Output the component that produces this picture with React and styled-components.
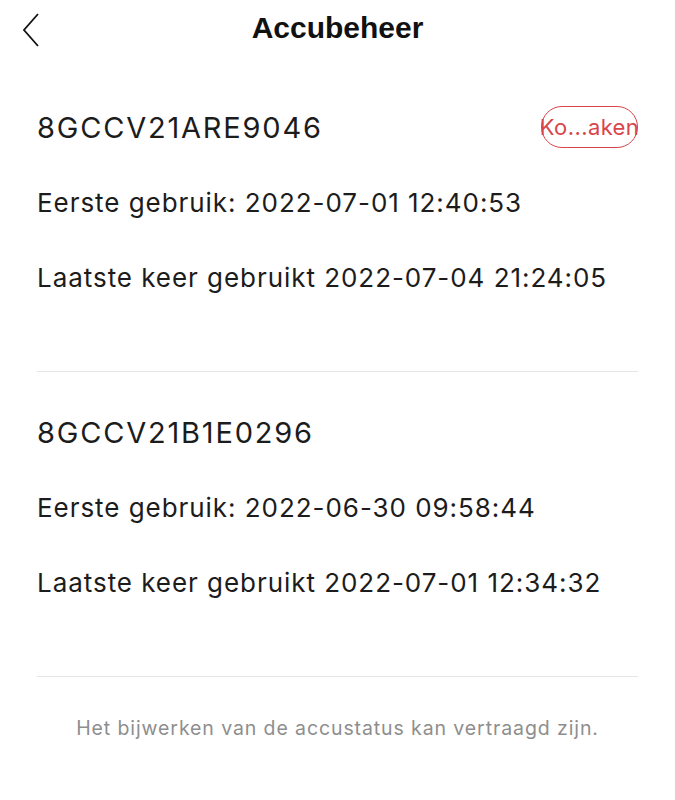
import React from 'react';
import styled, { createGlobalStyle } from 'styled-components';

const GlobalStyle = createGlobalStyle`
    html, body {
        margin: 0;
        padding: 0;
        background: #ffffff;
    }
    body {
        font-family: "Inter", "Noto Sans", sans-serif;
        color: #1a1a1a;
    }
`;

const PageSC = styled.div`
    width: 675px;
    min-height: 800px;
    background: #ffffff;
`;

const HeaderSC = styled.header`
    position: relative;
    height: 56px;
    display: flex;
    align-items: center;
    justify-content: center;
`;

const BackSC = styled.button`
    position: absolute;
    left: 16px;
    top: 12px;
    width: 30px;
    height: 36px;
    padding: 0;
    border: none;
    background: none;
    display: flex;
    align-items: center;
    justify-content: center;
`;

const TitleSC = styled.h1`
    margin: 0;
    font-family: "Liberation Sans", Arial, sans-serif;
    font-weight: bold;
    font-size: 30px;
    color: #111111;
`;

const ListSC = styled.div`
    padding: 10px 37px 0;
`;

const CardSC = styled.section`
    padding: 23.5px 0 56px;
    border-bottom: 1px solid #e6e6e6;
`;

const RowSC = styled.div`
    height: 75px;
    display: flex;
    align-items: center;
    justify-content: space-between;
    font-size: ${p => (p.$id ? '29px' : '26px')};
    letter-spacing: ${p => (p.$id ? '1.8px' : '0.95px')};
    color: #1c1c1c;
    white-space: nowrap;
`;

const BadgeSC = styled.span`
    height: 42px;
    width: 97px;
    box-sizing: border-box;
    border: 1.5px solid #d9454a;
    border-radius: 21px;
    color: #d9454a;
    font-size: 22px;
    letter-spacing: 0.4px;
    display: flex;
    align-items: center;
    justify-content: center;
    overflow: visible;
`;

const NoteSC = styled.p`
    margin: 0;
    padding-top: 39px;
    text-align: center;
    font-size: 19.5px;
    letter-spacing: 0.9px;
    color: #8e8e8e;
    white-space: nowrap;
`;

const batteries = [
    {
        id: '8GCCV21ARE9046',
        first: '2022-07-01 12:40:53',
        last: '2022-07-04 21:24:05',
        badge: 'Ko...aken',
    },
    {
        id: '8GCCV21B1E0296',
        first: '2022-06-30 09:58:44',
        last: '2022-07-01 12:34:32',
    },
];

const App = () => {
    return (
        <PageSC>
            <GlobalStyle />

            <HeaderSC>
                <BackSC aria-label="Terug">
                    <svg width="20" height="34" viewBox="0 0 20 34">
                        <path d="M17 1 L3 17 L17 33" fill="none" stroke="#111" strokeWidth="1.8" />
                    </svg>
                </BackSC>
                <TitleSC>Accubeheer</TitleSC>
            </HeaderSC>

            <ListSC>
                {batteries.map(b => (
                    <CardSC key={b.id}>
                        <RowSC $id>
                            <span>{b.id}</span>
                            {b.badge && <BadgeSC>{b.badge}</BadgeSC>}
                        </RowSC>
                        <RowSC>Eerste gebruik: {b.first}</RowSC>
                        <RowSC>Laatste keer gebruikt {b.last}</RowSC>
                    </CardSC>
                ))}
                <NoteSC>Het bijwerken van de accustatus kan vertraagd zijn.</NoteSC>
            </ListSC>
        </PageSC>
    );
};

export default App;
